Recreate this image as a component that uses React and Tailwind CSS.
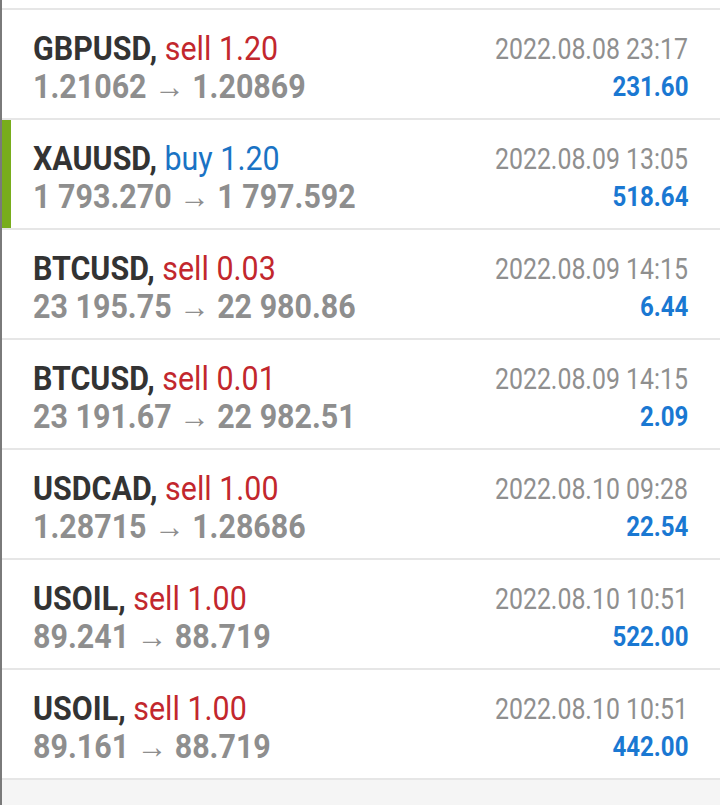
import React from "react";

const rows = [
  { sym: "GBPUSD", side: "sell", vol: "1.20", from: "1.21062", to: "1.20869", date: "2022.08.08 23:17", profit: "231.60" },
  { sym: "XAUUSD", side: "buy", vol: "1.20", from: "1 793.270", to: "1 797.592", date: "2022.08.09 13:05", profit: "518.64", active: true },
  { sym: "BTCUSD", side: "sell", vol: "0.03", from: "23 195.75", to: "22 980.86", date: "2022.08.09 14:15", profit: "6.44" },
  { sym: "BTCUSD", side: "sell", vol: "0.01", from: "23 191.67", to: "22 982.51", date: "2022.08.09 14:15", profit: "2.09" },
  { sym: "USDCAD", side: "sell", vol: "1.00", from: "1.28715", to: "1.28686", date: "2022.08.10 09:28", profit: "22.54" },
  { sym: "USOIL", side: "sell", vol: "1.00", from: "89.241", to: "88.719", date: "2022.08.10 10:51", profit: "522.00" },
  { sym: "USOIL", side: "sell", vol: "1.00", from: "89.161", to: "88.719", date: "2022.08.10 10:51", profit: "442.00" },
];

function Row({ r }) {
  return (
    <div className="relative h-[110px] border-b-2 border-[#e6e6e6] flex justify-between pl-[31px] pr-[32px] pt-[19px]">
      {r.active && <div className="absolute left-0 top-0 bottom-0 w-[9px] bg-[#78ad1c]" />}
      <div className="flex flex-col items-start">
        <div className="text-[34px] leading-[38px] whitespace-nowrap origin-left scale-x-[0.895]">
          <span className="font-bold text-[#333333]">{r.sym},</span>{" "}
          <span className={r.side === "sell" ? "text-[#c2272d]" : "text-[#1a73c4]"}>
            {r.side} {r.vol}
          </span>
        </div>
        <div className="text-[34px] leading-[38px] font-bold text-[#8e8e8e] whitespace-nowrap origin-left scale-x-[0.895]">
          {r.from} <span className="font-normal">→</span> {r.to}
        </div>
      </div>
      <div className="flex flex-col items-end pt-[2px]">
        <div className="text-[29.5px] leading-[37px] text-[#8f8f8f] whitespace-nowrap origin-right scale-x-[0.843]">{r.date}</div>
        <div className="text-[28px] leading-[38px] font-bold text-[#1a78d2] whitespace-nowrap origin-right scale-x-[0.86]">{r.profit}</div>
      </div>
    </div>
  );
}

export default function App() {
  return (
    <div className="w-[720px] h-[805px] overflow-hidden bg-[#f5f5f5] border-l-2 border-[#7a7a7a]" style={{ fontFamily: "Roboto, 'Liberation Sans', sans-serif" }}>
      <div className="bg-white">
        <div className="h-[10px] border-b-2 border-[#e6e6e6]" />
        {rows.map((r, i) => (
          <Row key={i} r={r} />
        ))}
      </div>
    </div>
  );
}
